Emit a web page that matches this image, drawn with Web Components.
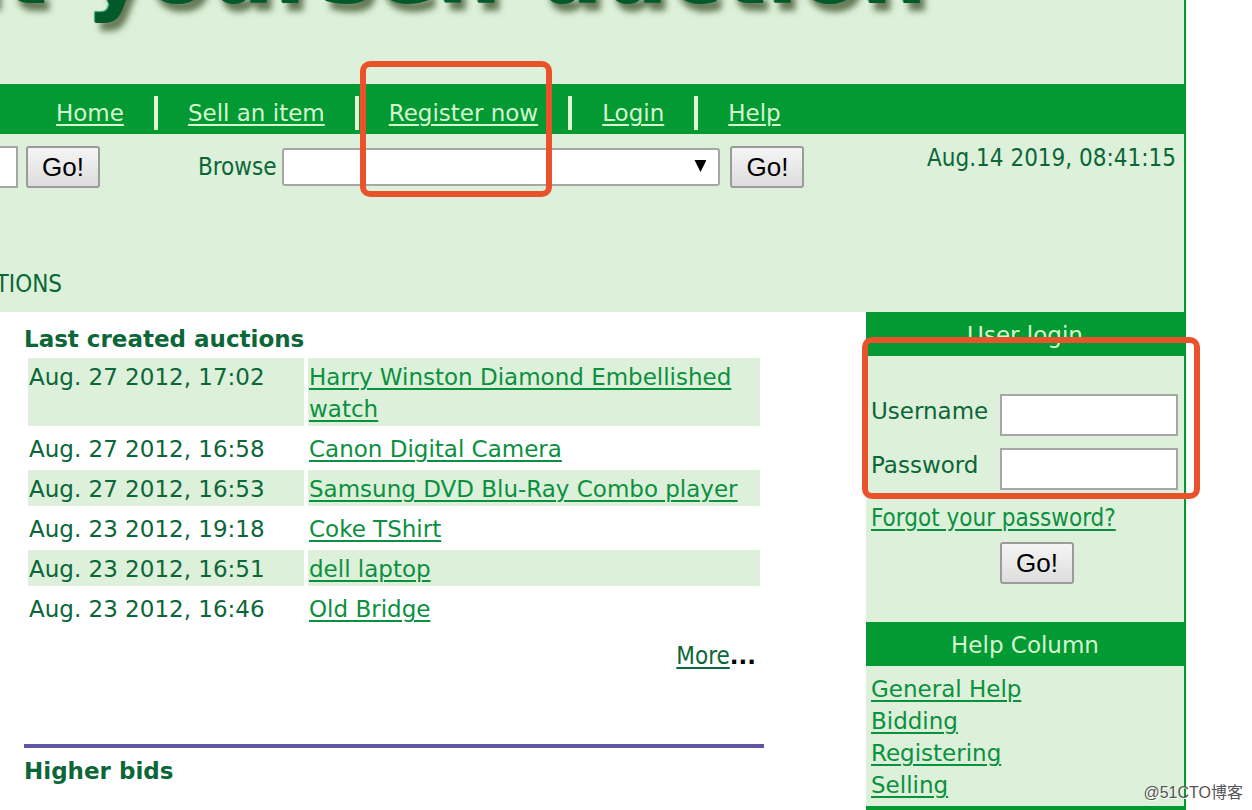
<!DOCTYPE html>
<html lang="en">
<head>
<meta charset="utf-8">
<meta name="viewport" content="width=device-width, initial-scale=1">
<title>Do-it-yourself auction</title>
<style>
  :root {
    --green: #039933;
    --pale: #ddf1da;
    --dark: #0b6638;
    --link: #0b9040;
    --mark: #e9522b;
    --body-font: 23px/32px "DejaVu Sans", Verdana, sans-serif;
    --tight-font: 24px/32px "DejaVu Sans Condensed", "DejaVu Sans", Tahoma, sans-serif;
    --control-font: "Liberation Sans", Arial, sans-serif;
  }
  body {
    margin: 0;
    background: #fff;
    color: var(--dark);
    font: var(--body-font);
  }
</style>
</head>
<body>
<auction-page>
  <site-banner slot="header">Do-it-yourself auction</site-banner>
  <nav-bar slot="header">
    <nav-item>Home</nav-item>
    <nav-item>Sell an item</nav-item>
    <nav-item marked>Register now</nav-item>
    <nav-item>Login</nav-item>
    <nav-item>Help</nav-item>
  </nav-bar>
  <search-tools slot="header" time="Aug.14 2019, 08:41:15" crumb="TIONS"></search-tools>

  <auction-list heading="Last created auctions"></auction-list>
  <auction-section heading="Higher bids"></auction-section>

  <side-panel slot="side" heading="User login"><login-form></login-form></side-panel>
  <side-panel slot="side" heading="Help Column"><help-links></help-links></side-panel>
</auction-page>

<script>
const linkStyle = `
        a {
            color: var(--link);
            text-decoration: underline 2px;
            text-underline-offset: 3px;
        }
`;

const buttonStyle = `
        button {
            box-sizing: border-box;
            height: 42px;
            padding: 0 14px;
            border: 2px solid #9b9b9b;
            border-radius: 3px;
            background: linear-gradient(#f5f5f5, #dddddd);
            color: #000;
            font: 26px/36px var(--control-font);
        }
`;

const inputStyle = `
        input {
            box-sizing: border-box;
            height: 42px;
            padding: 0 6px;
            border: 2px solid #a6a6a6;
            background: #fff;
            font: 24px/32px var(--control-font);
        }
`;

class AuctionPage extends HTMLElement
{
    constructor()
    {
        super();
        this.attachShadow({ mode: 'open' });
    }

    connectedCallback()
    {
        this.shadowRoot.innerHTML = `
      <style>
        :host {
            display: block;
            position: relative;
            height: 100vh;
            overflow: hidden;
        }

        .page {
            box-sizing: border-box;
            min-height: 100%;
            margin-right: 66px;
            border-right: 2px solid var(--green);
        }

        header {
            background: var(--pale);
        }

        .columns {
            display: grid;
            grid-template-columns: minmax(0, 1fr) 318px;
        }

        main {
            padding: 11px 102px 0 24px;
        }

        .next {
            height: 44px;
            background: var(--green);
        }

        .stamp {
            position: absolute;
            right: 9px;
            bottom: 5px;
            color: #555;
            font: 16px/24px "Liberation Sans", "Noto Sans CJK SC", sans-serif;
            text-shadow: 1px 1px 0 #fff;
        }
      </style>

        <div class="page">
            <header><slot name="header"></slot></header>
            <div class="columns">
                <main><slot></slot></main>
                <aside><slot name="side"></slot><div class="next"></div></aside>
            </div>
        </div>
        <div class="stamp">@51CTO博客</div>
    `;
    }
}

class SiteBanner extends HTMLElement
{
    constructor()
    {
        super();
        this.attachShadow({ mode: 'open' });
    }

    connectedCallback()
    {
        this.shadowRoot.innerHTML = `
      <style>
        :host {
            display: flex;
            justify-content: flex-end;
            align-items: flex-start;
            height: 84px;
            padding-right: 257px;
            overflow: hidden;
        }

        h1 {
            margin: -82px 0 0;
            color: #04592b;
            font-size: 92px;
            font-weight: 700;
            line-height: 108px;
            white-space: nowrap;
            text-shadow: -1px -1px 1px #18985a, 5px 8px 6px rgba(50, 70, 30, 0.7);
        }
      </style>

        <h1><slot></slot></h1>
    `;
    }
}

class NavBar extends HTMLElement
{
    constructor()
    {
        super();
        this.attachShadow({ mode: 'open' });
    }

    connectedCallback()
    {
        this.shadowRoot.innerHTML = `
      <style>
        :host {
            display: block;
            background: var(--green);
        }

        nav {
            display: flex;
            align-items: center;
            height: 50px;
            padding: 0 26px;
        }
      </style>

        <nav><slot></slot></nav>
    `;
    }
}

class NavItem extends HTMLElement
{
    constructor()
    {
        super();
        this.attachShadow({ mode: 'open' });
    }

    connectedCallback()
    {
        const mark = this.hasAttribute('marked') ? '<div class="mark"></div>' : '';

        this.shadowRoot.innerHTML = `
      <style>
        ${linkStyle}
        :host {
            display: flex;
            align-items: center;
            position: relative;
            padding: 8px 30px 0;
        }

        :host(:not(:last-child))::after {
            content: "";
            position: absolute;
            right: -4px;
            top: 7px;
            width: 4px;
            height: 34px;
            background: #e2f8d2;
        }

        :host(:not(:last-child)) {
            margin-right: 4px;
        }

        a {
            color: #d4f7d0;
            white-space: nowrap;
        }

        .mark {
            position: absolute;
            z-index: 2;
            left: 1px;
            right: 16px;
            top: -28px;
            height: 124px;
            border: 6px solid var(--mark);
            border-radius: 10px;
            pointer-events: none;
        }
      </style>

        <a href="#"><slot></slot></a>
        ${mark}
    `;
    }
}

class SearchTools extends HTMLElement
{
    constructor()
    {
        super();
        this.attachShadow({ mode: 'open' });
    }

    connectedCallback()
    {
        this.shadowRoot.innerHTML = `
      <style>
        ${buttonStyle}
        ${inputStyle}
        :host {
            display: block;
            height: 178px;
            font: var(--tight-font);
            overflow: hidden;
        }

        .row {
            display: flex;
            align-items: flex-start;
            justify-content: space-between;
            padding: 8px 8px 0 0;
        }

        form {
            display: flex;
            align-items: center;
            padding-top: 4px;
        }

        #search {
            width: 220px;
            margin: 0 8px 0 -202px;
        }

        label {
            margin: 0 6px 0 98px;
        }

        .select {
            position: relative;
            display: flex;
            margin-right: 10px;
        }

        .select::after {
            content: "";
            position: absolute;
            right: 14px;
            top: 12px;
            width: 12px;
            height: 12px;
            background: #000;
            clip-path: polygon(0 0, 100% 0, 50% 100%);
            pointer-events: none;
        }

        select {
            appearance: none;
            width: 438px;
            height: 38px;
            border: 2px solid #a6a6a6;
            border-radius: 3px;
            background: #fff;
            font: 24px/32px var(--control-font);
        }

        time {
            white-space: nowrap;
        }

        .crumb {
            display: flex;
            justify-content: flex-end;
            width: 62px;
            margin-top: 80px;
            white-space: nowrap;
        }
      </style>

        <div class="row">
            <form>
                <input id="search" type="text" aria-label="Search">
                <button type="button">Go!</button>
                <label for="browse">Browse</label>
                <span class="select"><select id="browse"><option></option></select></span>
                <button type="button">Go!</button>
            </form>
            <time>${this.getAttribute('time')}</time>
        </div>
        <div class="crumb">${this.getAttribute('crumb')}</div>
    `;
    }
}

class AuctionSection extends HTMLElement
{
    constructor()
    {
        super();
        this.attachShadow({ mode: 'open' });
    }

    connectedCallback()
    {
        this.shadowRoot.innerHTML = `
      <style>
        :host {
            display: block;
            margin-top: 72px;
            padding-top: 7px;
            border-top: 4px solid #5f57a3;
        }

        h2 {
            margin: 0;
            font-size: 23px;
            line-height: 32px;
        }
      </style>

        <h2>${this.getAttribute('heading')}</h2>
    `;
    }
}

class AuctionList extends HTMLElement
{
    constructor()
    {
        super();
        this.attachShadow({ mode: 'open' });
    }

    get items()
    {
        return [
            ['Aug. 27 2012, 17:02', 'Harry Winston Diamond Embellished watch'],
            ['Aug. 27 2012, 16:58', 'Canon Digital Camera'],
            ['Aug. 27 2012, 16:53', 'Samsung DVD Blu-Ray Combo player'],
            ['Aug. 23 2012, 19:18', 'Coke TShirt'],
            ['Aug. 23 2012, 16:51', 'dell laptop'],
            ['Aug. 23 2012, 16:46', 'Old Bridge']
        ];
    }

    connectedCallback()
    {
        const rows = this.items.map(([date, name]) => `
            <tr><td>${date}</td><td><a href="#">${name}</a></td></tr>`).join('');

        this.shadowRoot.innerHTML = `
      <style>
        ${linkStyle}
        :host {
            display: block;
        }

        h2 {
            margin: 0;
            font-size: 23px;
            line-height: 32px;
        }

        table {
            width: 100%;
            border-spacing: 4px;
            table-layout: fixed;
            margin-top: -1px;
        }

        td {
            padding: 3px 1px 1px;
            vertical-align: top;
        }

        td:first-child {
            width: 274px;
        }

        tr:nth-child(odd) td {
            background: var(--pale);
        }

        .more {
            padding: 10px 8px 0 0;
            color: #000;
            font: var(--tight-font);
            text-align: right;
        }

        .more a {
            color: var(--dark);
        }

        .more span {
            font: var(--body-font);
            font-weight: 700;
        }
      </style>

        <h2>${this.getAttribute('heading')}</h2>
        <table>${rows}</table>
        <div class="more"><a href="#">More</a><span>...</span></div>
    `;
    }
}

class SidePanel extends HTMLElement
{
    constructor()
    {
        super();
        this.attachShadow({ mode: 'open' });
    }

    connectedCallback()
    {
        this.shadowRoot.innerHTML = `
      <style>
        :host {
            display: block;
            background: var(--pale);
        }

        h2 {
            margin: 0;
            padding-top: 2px;
            background: var(--green);
            color: #d4f7d0;
            font-size: 23px;
            font-weight: 400;
            line-height: 42px;
            text-align: center;
        }
      </style>

        <h2>${this.getAttribute('heading')}</h2>
        <slot></slot>
    `;
    }
}

class LoginForm extends HTMLElement
{
    constructor()
    {
        super();
        this.attachShadow({ mode: 'open' });
    }

    connectedCallback()
    {
        this.shadowRoot.innerHTML = `
      <style>
        ${linkStyle}
        ${buttonStyle}
        ${inputStyle}
        :host {
            display: block;
            position: relative;
            padding: 38px 6px 38px 5px;
        }

        .field {
            display: grid;
            grid-template-columns: 129px minmax(0, 1fr);
            margin-bottom: 12px;
        }

        label {
            padding-top: 1px;
        }

        input {
            width: 100%;
        }

        .forgot {
            margin-bottom: 8px;
            font: var(--tight-font);
        }

        button {
            display: block;
            margin-left: 129px;
        }

        .mark {
            position: absolute;
            z-index: 2;
            left: -4px;
            right: -16px;
            top: -19px;
            height: 150px;
            border: 6px solid var(--mark);
            border-radius: 10px;
            pointer-events: none;
        }
      </style>

        <form>
            <div class="field">
                <label for="username">Username</label>
                <input id="username" type="text">
            </div>
            <div class="field">
                <label for="password">Password</label>
                <input id="password" type="password">
            </div>
            <div class="forgot"><a href="#">Forgot your password?</a></div>
            <button type="button">Go!</button>
        </form>
        <div class="mark"></div>
    `;
    }
}

class HelpLinks extends HTMLElement
{
    constructor()
    {
        super();
        this.attachShadow({ mode: 'open' });
    }

    connectedCallback()
    {
        const topics = ['General Help', 'Bidding', 'Registering', 'Selling'];

        this.shadowRoot.innerHTML = `
      <style>
        ${linkStyle}
        :host {
            display: block;
            padding: 7px 5px 5px;
        }

        ul {
            margin: 0;
            padding: 0;
            list-style: none;
        }
      </style>

        <ul>${topics.map(topic => `<li><a href="#">${topic}</a></li>`).join('')}</ul>
    `;
    }
}

window.customElements.define("auction-page", AuctionPage)
window.customElements.define("site-banner", SiteBanner)
window.customElements.define("nav-bar", NavBar)
window.customElements.define("nav-item", NavItem)
window.customElements.define("search-tools", SearchTools)
window.customElements.define("auction-section", AuctionSection)
window.customElements.define("auction-list", AuctionList)
window.customElements.define("side-panel", SidePanel)
window.customElements.define("login-form", LoginForm)
window.customElements.define("help-links", HelpLinks)
</script>
</body>
</html>
